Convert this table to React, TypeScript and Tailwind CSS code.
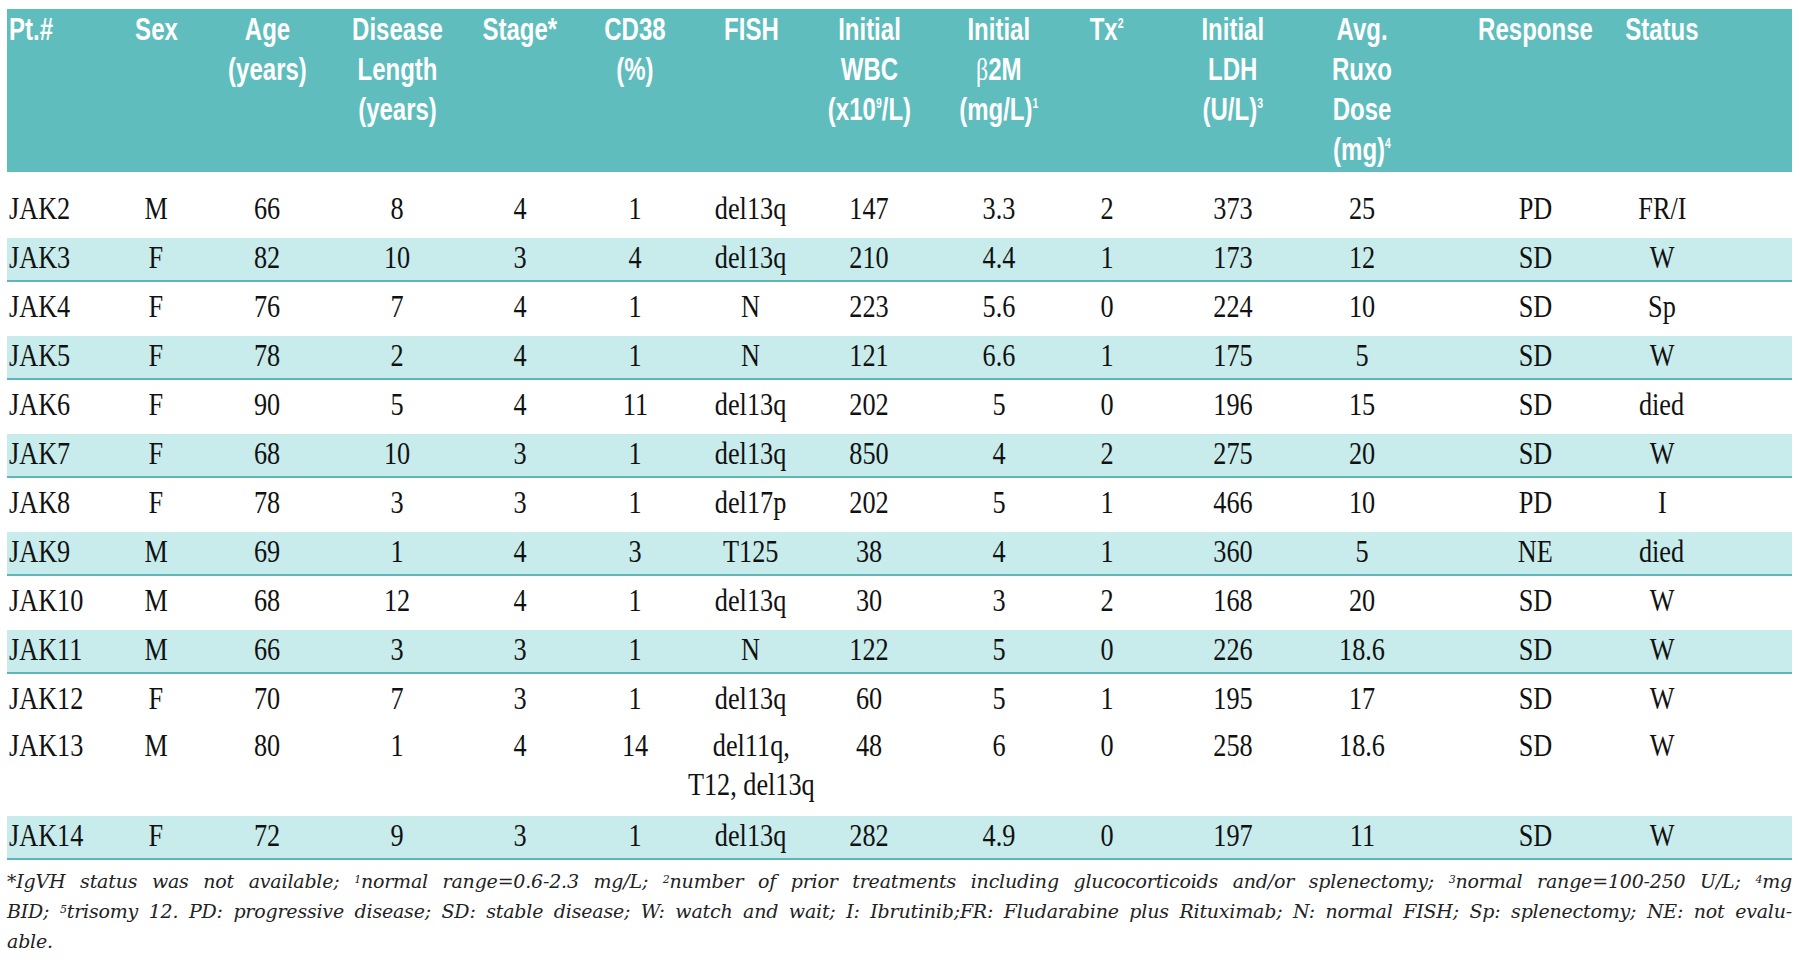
import React from 'react';

type Row = {
  cells: React.ReactNode[];
  shaded?: boolean;
  tall?: boolean;
};

const GRID =
  'grid grid-cols-[93px_112px_110px_150px_96px_134px_98px_138px_122px_94px_158px_100px_186px_128px_1fr]';

const rows: Row[] = [
  { cells: ['JAK2', 'M', '66', '8', '4', '1', 'del13q', '147', '3.3', '2', '373', '25', 'PD', 'FR/I'] },
  { cells: ['JAK3', 'F', '82', '10', '3', '4', 'del13q', '210', '4.4', '1', '173', '12', 'SD', 'W'], shaded: true },
  { cells: ['JAK4', 'F', '76', '7', '4', '1', 'N', '223', '5.6', '0', '224', '10', 'SD', 'Sp'] },
  { cells: ['JAK5', 'F', '78', '2', '4', '1', 'N', '121', '6.6', '1', '175', '5', 'SD', 'W'], shaded: true },
  { cells: ['JAK6', 'F', '90', '5', '4', '11', 'del13q', '202', '5', '0', '196', '15', 'SD', 'died'] },
  { cells: ['JAK7', 'F', '68', '10', '3', '1', 'del13q', '850', '4', '2', '275', '20', 'SD', 'W'], shaded: true },
  { cells: ['JAK8', 'F', '78', '3', '3', '1', 'del17p', '202', '5', '1', '466', '10', 'PD', 'I'] },
  { cells: ['JAK9', 'M', '69', '1', '4', '3', 'T125', '38', '4', '1', '360', '5', 'NE', 'died'], shaded: true },
  { cells: ['JAK10', 'M', '68', '12', '4', '1', 'del13q', '30', '3', '2', '168', '20', 'SD', 'W'] },
  { cells: ['JAK11', 'M', '66', '3', '3', '1', 'N', '122', '5', '0', '226', '18.6', 'SD', 'W'], shaded: true },
  { cells: ['JAK12', 'F', '70', '7', '3', '1', 'del13q', '60', '5', '1', '195', '17', 'SD', 'W'] },
  {
    cells: [
      'JAK13', 'M', '80', '1', '4', '14',
      <>del11q,<br />T12, del13q</>,
      '48', '6', '0', '258', '18.6', 'SD', 'W',
    ],
    tall: true,
  },
  { cells: ['JAK14', 'F', '72', '9', '3', '1', 'del13q', '282', '4.9', '0', '197', '11', 'SD', 'W'], shaded: true },
];

const Sup = ({ children }: { children: React.ReactNode }) => (
  <sup className="text-[14px] font-bold -top-[12px]">{children}</sup>
);

const Beta = () => (
  <span className="font-['Liberation_Serif',serif] font-normal">β</span>
);

const headers: React.ReactNode[] = [
  <>Pt.#</>,
  <>Sex</>,
  <>Age<br />(years)</>,
  <>Disease<br />Length<br />(years)</>,
  <>Stage*</>,
  <>CD38<br />(%)</>,
  <>FISH</>,
  <>Initial<br />WBC<br />(x10<Sup>9</Sup>/L)</>,
  <>Initial<br /><Beta />2M<br />(mg/L)<Sup>1</Sup></>,
  <>Tx<Sup>2</Sup></>,
  <>Initial<br />LDH<br />(U/L)<Sup>3</Sup></>,
  <>Avg.<br />Ruxo<br />Dose<br />(mg)<Sup>4</Sup></>,
  <>Response</>,
  <>Status</>,
];

function cellClass(i: number) {
  if (i === 0) return 'flex justify-start pl-[2px]';
  if (i === 12) return 'flex justify-center pl-[60px]';
  return 'flex justify-center';
}

function DataRow({ row }: { row: Row }) {
  const inner = (
    <div className={GRID}>
      {row.cells.map((c, i) => (
        <div key={i} className={cellClass(i)}>
          <span
            className={
              i === 0
                ? 'inline-block whitespace-nowrap origin-left scale-x-[0.82]'
                : 'inline-block whitespace-nowrap text-center scale-x-[0.82]'
            }
          >
            {c}
          </span>
        </div>
      ))}
      <div />
    </div>
  );

  if (row.shaded) {
    return (
      <div className="h-[49px] pt-[5px]">
        <div className="h-[44px] pb-[3px] bg-[#c8ebeb] border-b-2 border-[#5cb7b8] flex flex-col justify-center">
          {inner}
        </div>
      </div>
    );
  }
  return (
    <div className={row.tall ? 'h-[88px] pt-[3px]' : 'h-[49px] flex flex-col justify-center'}>
      {inner}
    </div>
  );
}

export default function App() {
  return (
    <div className="w-[1800px] h-[966px] bg-white overflow-hidden pt-[9px] pl-[7px] pr-[8px]">
      {/* Header */}
      <div
        className={`${GRID} h-[163px] bg-[#5fbdbe] text-white font-bold text-[32px] leading-[40px] font-['Liberation_Sans',sans-serif]`}
      >
        {headers.map((h, i) => (
          <div key={i} className={cellClass(i)}>
            <span
              className={
                i === 0
                  ? 'inline-block whitespace-nowrap origin-left scale-x-[0.75]'
                  : 'inline-block whitespace-nowrap text-center scale-x-[0.75]'
              }
            >
              {h}
            </span>
          </div>
        ))}
        <div />
      </div>

      {/* Body */}
      <div className="pt-[12px] font-['Liberation_Serif',serif] text-[32px] leading-[39px] text-[#111]">
        {rows.map((r, i) => (
          <DataRow key={i} row={r} />
        ))}
      </div>

      {/* Footnote */}
      <div className="pt-[6px] font-['DejaVu_Serif',serif] italic text-[19px] tracking-[-0.2px] leading-[30px] text-[#222]">
        <p className="text-justify [text-align-last:justify] whitespace-nowrap">
          *IgVH status was not available; <sup className="text-[11px]">1</sup>normal range=0.6-2.3 mg/L; <sup className="text-[11px]">2</sup>number of prior treatments including glucocorticoids and/or splenectomy; <sup className="text-[11px]">3</sup>normal range=100-250 U/L; <sup className="text-[11px]">4</sup>mg
        </p>
        <p className="text-justify [text-align-last:justify] whitespace-nowrap">
          BID; <sup className="text-[11px]">5</sup>trisomy 12. PD: progressive disease; SD: stable disease; W: watch and wait; I: Ibrutinib;FR: Fludarabine plus Rituximab; N: normal FISH; Sp: splenectomy; NE: not evalu-
        </p>
        <p>able.</p>
      </div>
    </div>
  );
}
